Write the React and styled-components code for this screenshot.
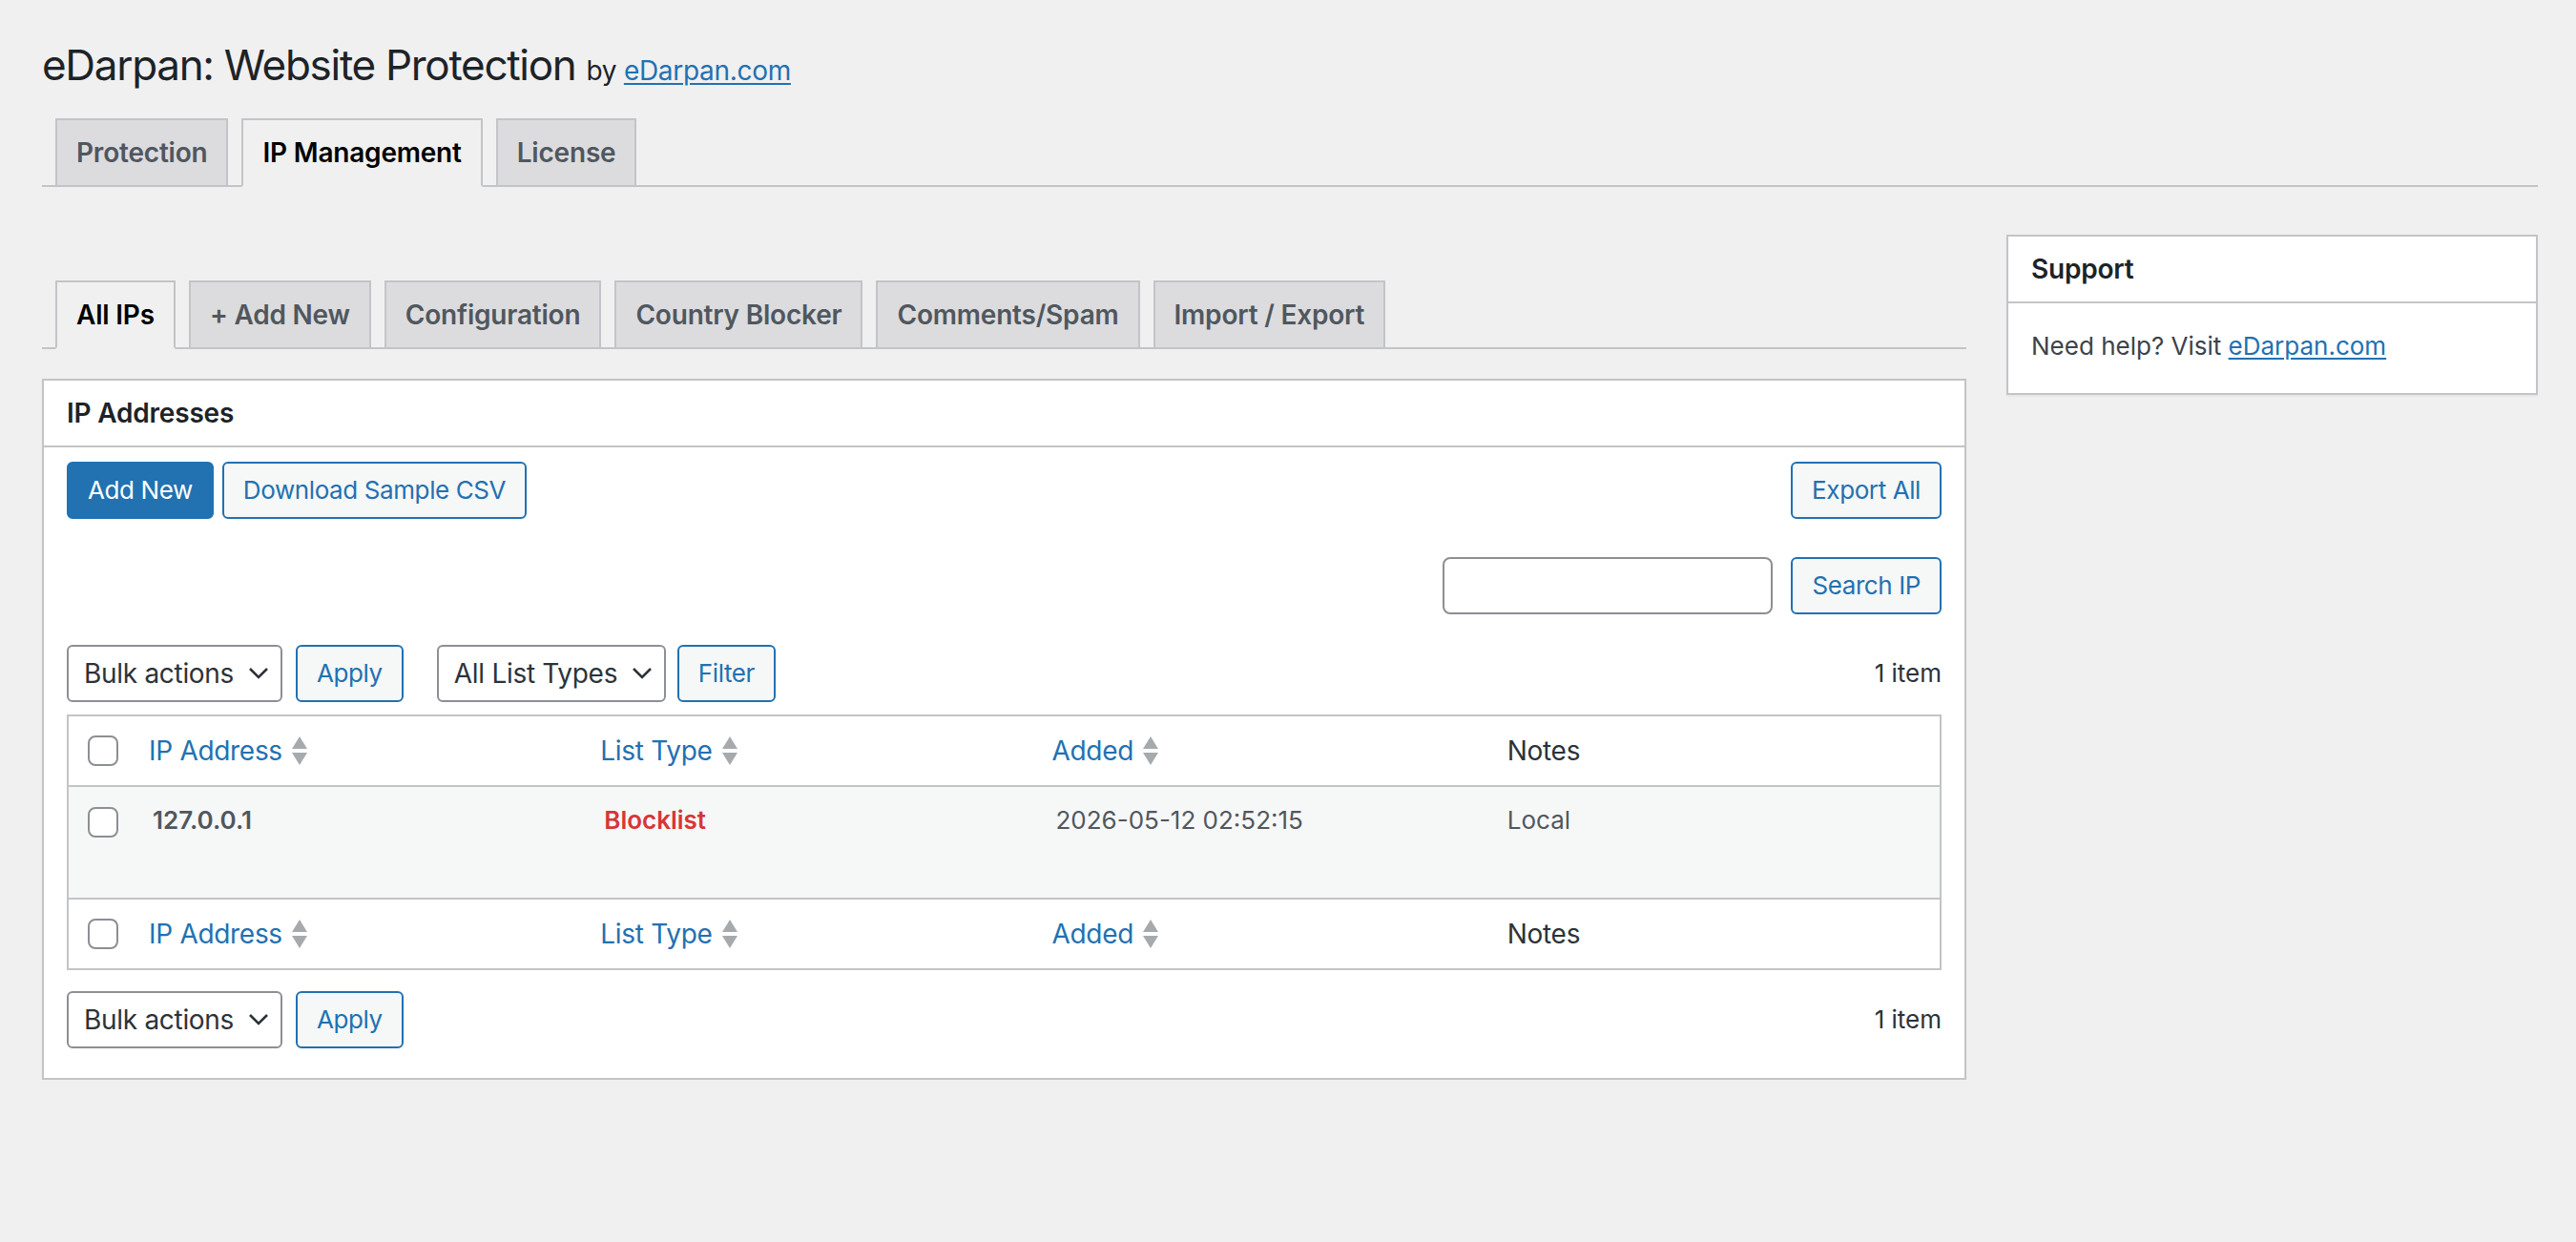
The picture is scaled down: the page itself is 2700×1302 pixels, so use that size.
import React from "react"
import styled, { createGlobalStyle } from "styled-components"

const GlobalStyle = createGlobalStyle`
    html, body {
        margin: 0;
        padding: 0;
        background: #f0f0f1;
    }
    body {
        font-family: Inter, "Noto Sans", "Liberation Sans", sans-serif;
        font-size: 26px;
        line-height: 1.4;
        color: #3c434a;
    }
    * { box-sizing: border-box; }
`

const Wrap = styled.div`
    margin: 20px 40px 0 44px;
`

const PageTitle = styled.h1`
    margin: 0;
    padding: 18px 0 8px;
    font-size: 44px;
    font-weight: 400;
    line-height: 60px;
    letter-spacing: -1.3px;
    color: #1d2327;
`

const ByLine = styled.span`
    font-size: 28px;
    line-height: 1;
    letter-spacing: -0.3px;
`

const TextLink = styled.a`
    color: #2271b1;
    text-decoration: underline;
    text-underline-offset: 3px;
    text-decoration-thickness: 2px;
`

const TabBar = styled.nav`
    display: flex;
    align-items: flex-end;
    gap: 14px;
    padding: ${p => (p.$inner ? "0" : "18px")} 0 0 14px;
    border-bottom: 2px solid #c3c4c7;
`

const Tab = styled.a`
    display: block;
    padding: 10px 20px;
    border: 2px solid #c3c4c7;
    border-bottom: ${p => (p.$active ? "2px solid #f0f0f1" : "none")};
    margin-bottom: ${p => (p.$active ? "-2px" : "0")};
    background: ${p => (p.$active ? "#f0f0f1" : "#dcdcde")};
    color: ${p => (p.$active ? "#000" : "#50575e")};
    font-size: 28px;
    font-weight: 600;
    line-height: 48px;
    letter-spacing: -0.2px;
    text-decoration: none;
    white-space: nowrap;
`

const Columns = styled.div`
    display: flex;
    align-items: flex-start;
    gap: 42px;
    margin-top: 50px;
`

const MainCol = styled.div`
    flex: 1;
    min-width: 0;
    padding-top: 48px;
`

const Sidebar = styled.aside`
    flex: none;
    width: 557px;
`

const Postbox = styled.div`
    margin-top: ${p => p.$top ?? 0}px;
    background: #fff;
    border: 2px solid #c3c4c7;
    box-shadow: 0 2px 2px rgba(0, 0, 0, 0.04);
`

const PostboxTitle = styled.h2`
    margin: 0;
    padding: 15px 24px 14px;
    font-size: 28px;
    font-weight: 600;
    line-height: 1.4;
    letter-spacing: -0.2px;
    color: #1d2327;
    border-bottom: 2px solid #c3c4c7;
`

const Inside = styled.div`
    padding: 15px 24px 31px;
`

const SupportText = styled.p`
    margin: 27px 0 0;
    padding: 0 24px 30px;
    font-size: 26px;
    line-height: 1.4;
    color: #3c434a;
`

const ToolRow = styled.div`
    display: flex;
    align-items: center;
    justify-content: ${p => p.$justify || "flex-start"};
    gap: ${p => p.$gap ?? 9}px;
    margin-top: ${p => p.$top ?? 0}px;
`

const ButtonGroup = styled.div`
    display: flex;
    align-items: center;
    gap: 9px;
`

const Button = styled.button`
    margin: 0 ${p => p.$after ?? 0}px 0 0;
    height: 60px;
    padding: 0 20px;
    border: 2px solid #2271b1;
    border-radius: 6px;
    background: ${p => (p.$primary ? "#2271b1" : "#f6f7f7")};
    color: ${p => (p.$primary ? "#fff" : "#2271b1")};
    font-family: inherit;
    font-size: 26px;
    line-height: 56px;
    letter-spacing: -0.4px;
    white-space: nowrap;
    cursor: pointer;
`

const SearchInput = styled.input`
    margin: 0;
    width: 346px;
    height: 60px;
    padding: 0 16px;
    border: 2px solid #8c8f94;
    border-radius: 8px;
    background: #fff;
    font-family: inherit;
    font-size: 28px;
`

const SelectWrap = styled.div`
    position: relative;
    display: inline-flex;
    margin-right: ${p => p.$after ?? 0}px;
`

const Select = styled.select`
    appearance: none;
    margin: 0;
    height: 60px;
    padding: 0 48px 0 16px;
    border: 2px solid #8c8f94;
    border-radius: 6px;
    background: #fff;
    color: #2c3338;
    font-family: inherit;
    font-size: 28px;
    line-height: 56px;
    letter-spacing: -0.3px;
`

const ChevronIcon = styled.svg`
    position: absolute;
    right: 14px;
    top: 50%;
    transform: translateY(-50%);
    pointer-events: none;
`

const Count = styled.span`
    margin-left: auto;
    font-size: 26px;
    color: #2c3338;
`

const Table = styled.table`
    width: 100%;
    margin-top: 13px;
    border: 2px solid #c3c4c7;
    border-spacing: 0;
    table-layout: fixed;
    background: #fff;
`

const HeadCell = styled.th`
    padding: 16px 20px;
    padding-left: ${p => (p.$sortable ? 16 : 20)}px;
    text-align: left;
    font-size: 28px;
    font-weight: 400;
    line-height: 40px;
    letter-spacing: -0.3px;
    color: #2c3338;
    vertical-align: middle;
    border-${p => (p.$foot ? "top" : "bottom")}: 2px solid #c3c4c7;
`

const CheckCell = styled.th`
    width: 68px;
    padding: ${p => (p.$body ? "21px 0 0 20px" : "0 0 0 20px")};
    vertical-align: ${p => (p.$body ? "top" : "middle")};
    border-${p => (p.$foot ? "top" : "bottom")}: ${p => (p.$plain ? "0" : "2px solid #c3c4c7")};
    text-align: left;
`

const Checkbox = styled.span`
    display: block;
    width: 32px;
    height: 32px;
    border: 2px solid #8c8f94;
    border-radius: 8px;
    background: #fff;
`

const SortLink = styled.a`
    display: inline-flex;
    align-items: center;
    gap: 10px;
    color: #2271b1;
    text-decoration: none;
`

const Row = styled.tr`
    background: #f6f7f7;
`

const Cell = styled.td`
    padding: 15px 20px 62px;
    vertical-align: top;
    font-size: 26px;
    line-height: 39px;
    color: ${p => p.$color || "#50575e"};
    font-weight: ${p => (p.$strong ? 600 : 400)};
`

const Chevron = () => (
    <ChevronIcon width="22" height="14" viewBox="0 0 22 14">
        <path d="M2 2 L11 11 L20 2" fill="none" stroke="#2c3338" strokeWidth="2.6" />
    </ChevronIcon>
)

const SortArrows = () => (
    <svg width="16" height="30" viewBox="0 0 16 30">
        <polygon points="8,0 16,13 0,13" fill="#a7aaad" />
        <polygon points="0,17 16,17 8,30" fill="#a7aaad" />
    </svg>
)

const ColumnRow = ({ foot }) => (
    <tr>
        <CheckCell $foot={foot}><Checkbox /></CheckCell>
        {["IP Address", "List Type", "Added"].map(label => (
            <HeadCell key={label} $foot={foot} $sortable>
                <SortLink href="#">{label}<SortArrows /></SortLink>
            </HeadCell>
        ))}
        <HeadCell $foot={foot}>Notes</HeadCell>
    </tr>
)

const ListSelect = ({ options, after }) => (
    <SelectWrap $after={after}>
        <Select defaultValue={options[0]}>
            {options.map(o => <option key={o} value={o}>{o}</option>)}
        </Select>
        <Chevron />
    </SelectWrap>
)

const BulkBar = ({ top, withFilter }) => (
    <ToolRow $top={top} $gap={0}>
        <ListSelect options={["Bulk actions", "Delete"]} after={14} />
        <Button $after={withFilter ? 35 : 0}>Apply</Button>
        {withFilter && (
            <>
                <ListSelect options={["All List Types", "Allowlist", "Blocklist"]} after={12} />
                <Button>Filter</Button>
            </>
        )}
        <Count>1 item</Count>
    </ToolRow>
)

const mainTabs = ["Protection", "IP Management", "License"]
const ipTabs = ["All IPs", "+ Add New", "Configuration", "Country Blocker", "Comments/Spam", "Import / Export"]

export default function App() {
    return (
        <>
            <GlobalStyle />
            <Wrap>
                <PageTitle>
                    eDarpan: Website Protection <ByLine>by <TextLink href="#">eDarpan.com</TextLink></ByLine>
                </PageTitle>
                <TabBar>
                    {mainTabs.map(t => (
                        <Tab key={t} href="#" $active={t === "IP Management"}>{t}</Tab>
                    ))}
                </TabBar>

                <Columns>
                    <MainCol>
                        <TabBar $inner>
                            {ipTabs.map(t => (
                                <Tab key={t} href="#" $active={t === "All IPs"}>{t}</Tab>
                            ))}
                        </TabBar>

                        <Postbox $top={31}>
                            <PostboxTitle>IP Addresses</PostboxTitle>
                            <Inside>
                                <ToolRow $justify="space-between">
                                    <ButtonGroup>
                                        <Button $primary>Add New</Button>
                                        <Button>Download Sample CSV</Button>
                                    </ButtonGroup>
                                    <Button>Export All</Button>
                                </ToolRow>
                                <ToolRow $justify="flex-end" $gap={19} $top={40}>
                                    <SearchInput type="search" />
                                    <Button>Search IP</Button>
                                </ToolRow>

                                <BulkBar top={32} withFilter />

                                <Table>
                                    <thead>
                                        <ColumnRow />
                                    </thead>
                                    <tbody>
                                        <Row>
                                            <CheckCell $body $plain><Checkbox /></CheckCell>
                                            <Cell $strong>127.0.0.1</Cell>
                                            <Cell $strong $color="#d63638">Blocklist</Cell>
                                            <Cell>2026-05-12 02:52:15</Cell>
                                            <Cell>Local</Cell>
                                        </Row>
                                    </tbody>
                                    <tfoot>
                                        <ColumnRow foot />
                                    </tfoot>
                                </Table>

                                <BulkBar top={22} />
                            </Inside>
                        </Postbox>
                    </MainCol>

                    <Sidebar>
                        <Postbox>
                            <PostboxTitle>Support</PostboxTitle>
                            <SupportText>
                                Need help? Visit <TextLink href="#">eDarpan.com</TextLink>
                            </SupportText>
                        </Postbox>
                    </Sidebar>
                </Columns>
            </Wrap>
        </>
    )
}
